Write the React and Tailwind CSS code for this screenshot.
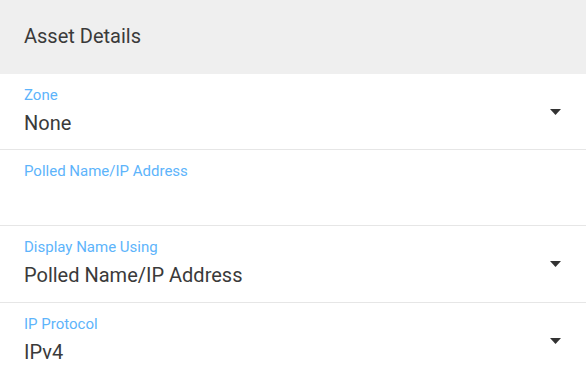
import React from 'react';

const Caret = () => (
  <svg className="w-[11px] h-[6px] text-[#333]" viewBox="0 0 11 6" fill="currentColor">
    <path d="M0 0h11L5.5 6z" />
  </svg>
);

const Field = ({ label, value, select, tall }) => (
  <div className={`${tall ? 'h-[77px]' : 'h-[76px]'} border-b border-[#e6e6e6] flex items-center pl-6 pr-[25px]`}>
    <div className="flex-1 self-start pt-3">
      <div className="text-[15px] leading-[18px] text-[#5db4fb]">{label}</div>
      <div className="mt-[7px] text-[20px] leading-6 text-[#3a3a3a]">{value}</div>
    </div>
    {select && <Caret />}
  </div>
);

export default function App() {
  const fields = [
    { label: 'Zone', value: 'None', select: true },
    { label: 'Polled Name/IP Address', value: '', select: false },
    { label: 'Display Name Using', value: 'Polled Name/IP Address', select: true, tall: true },
    { label: 'IP Protocol', value: 'IPv4', select: true },
  ];

  return (
    <div className="w-[586px] h-[374px] overflow-hidden bg-white" style={{ fontFamily: 'Roboto, "Liberation Sans", sans-serif' }}>
      <div className="h-[74px] bg-[#efefef] flex items-center px-6">
        <h2 className="text-[20px] leading-6 text-[#3a3a3a] -mt-[2px]">Asset Details</h2>
      </div>
      {fields.map((f) => (
        <Field key={f.label} {...f} />
      ))}
    </div>
  );
}
